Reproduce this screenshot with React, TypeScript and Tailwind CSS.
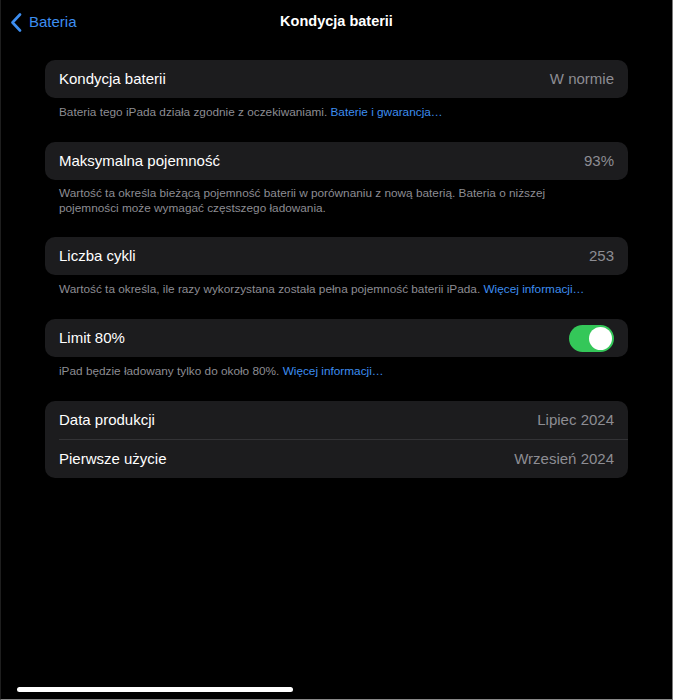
export default function App() {
  return (
    <div
      className="h-[700px] w-[673px] bg-black flex flex-col border-l border-l-[#1e1e1e] border-r border-r-[#7a7a7a] border-b border-b-[#8a8a8a] text-white"
      style={{ fontFamily: '"Liberation Sans", Arial, sans-serif' }}
    >
      {/* Nav bar */}
      <div className="relative h-[44px] flex items-center">
        <div className="flex items-center pl-[9px] gap-[7px] text-[#3d8ef0]">
          <svg width="12" height="19" viewBox="0 0 12 19" fill="none">
            <path d="M10 1.5 L2.5 9.5 L10 17.5" stroke="#3d8ef0" strokeWidth="2.6" strokeLinecap="round" strokeLinejoin="round" />
          </svg>
          <span className="text-[15px]">Bateria</span>
        </div>
        <div className="absolute inset-0 flex items-center justify-center pointer-events-none">
          <span className="text-[14.5px] font-bold">Kondycja baterii</span>
        </div>
      </div>

      <div className="mt-[16px] ml-[44px] w-[583px] flex flex-col">
        {/* Kondycja */}
        <div className="h-[38px] rounded-[10px] bg-[#1c1c1e] flex items-center justify-between px-[14px]">
          <span className="text-[15px]">Kondycja baterii</span>
          <span className="text-[15px] text-[#8d8d93]">W normie</span>
        </div>
        <p className="pt-[7px] pb-[22px] px-[14px] text-[11.8px] leading-[15px] text-[#8d8d93]">
          Bateria tego iPada działa zgodnie z oczekiwaniami.{" "}
          <span className="text-[#3d8ef0]">Baterie i gwarancja…</span>
        </p>

        {/* Pojemność */}
        <div className="h-[38px] rounded-[10px] bg-[#1c1c1e] flex items-center justify-between px-[14px]">
          <span className="text-[15px]">Maksymalna pojemność</span>
          <span className="text-[15px] text-[#8d8d93]">93%</span>
        </div>
        <p className="pt-[6px] pb-[21px] px-[14px] pr-[20px] text-[11.8px] leading-[15px] text-[#8d8d93]">
          Wartość ta określa bieżącą pojemność baterii w porównaniu z nową baterią. Bateria o niższej
          <br />
          pojemności może wymagać częstszego ładowania.
        </p>

        {/* Cykle */}
        <div className="h-[38px] rounded-[10px] bg-[#1c1c1e] flex items-center justify-between px-[14px]">
          <span className="text-[15px]">Liczba cykli</span>
          <span className="text-[15px] text-[#8d8d93]">253</span>
        </div>
        <p className="pt-[7px] pb-[22px] px-[14px] text-[11.8px] leading-[15px] text-[#8d8d93] whitespace-nowrap">
          Wartość ta określa, ile razy wykorzystana została pełna pojemność baterii iPada.{" "}
          <span className="text-[#3d8ef0]">Więcej informacji…</span>
        </p>

        {/* Limit */}
        <div className="h-[38px] rounded-[10px] bg-[#1c1c1e] flex items-center justify-between pl-[14px] pr-[14px]">
          <span className="text-[15px]">Limit 80%</span>
          <div className="w-[45px] h-[27px] rounded-full bg-[#34c759] flex items-center justify-end pr-[2px]">
            <div className="w-[23px] h-[23px] rounded-full bg-white" />
          </div>
        </div>
        <p className="pt-[7px] pb-[22px] px-[14px] text-[11.8px] leading-[15px] text-[#8d8d93]">
          iPad będzie ładowany tylko do około 80%.{" "}
          <span className="text-[#3d8ef0]">Więcej informacji…</span>
        </p>

        {/* Daty */}
        <div className="rounded-[10px] bg-[#1c1c1e] flex flex-col">
          <div className="h-[38px] flex items-center justify-between px-[14px]">
            <span className="text-[15px]">Data produkcji</span>
            <span className="text-[15px] text-[#8d8d93]">Lipiec 2024</span>
          </div>
          <div className="ml-[14px] h-px bg-[#333336]" />
          <div className="h-[38px] flex items-center justify-between px-[14px]">
            <span className="text-[15px]">Pierwsze użycie</span>
            <span className="text-[15px] text-[#8d8d93]">Wrzesień 2024</span>
          </div>
        </div>
      </div>

      {/* Home indicator */}
      <div className="mt-auto mb-[7px] ml-[16px] w-[276px] h-[5px] rounded-full bg-white" />
    </div>
  );
}
